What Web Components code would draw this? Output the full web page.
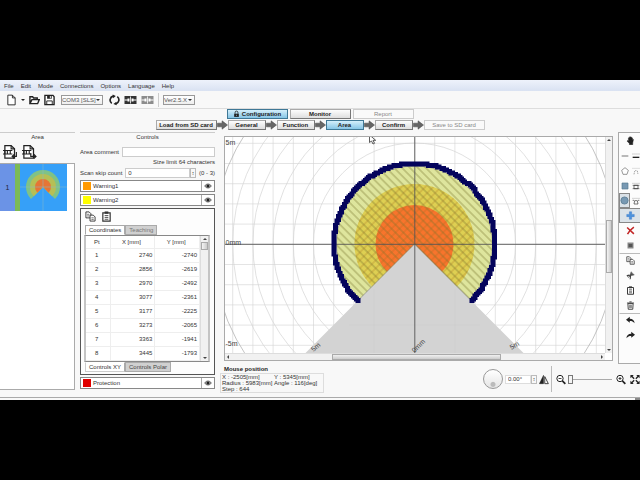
<!DOCTYPE html>
<html lang="en">
<head>
<meta charset="utf-8">
<title>Area configuration</title>
<style>
html,body{height:100%}
body{margin:0;padding:80px 0;box-sizing:border-box;background:#000;font:6px/8px "Liberation Sans",Arial,sans-serif;color:#333;overflow:hidden}
</style>
</head>
<body>
<area-designer></area-designer>
<script>
const define = (tag, css, html) => {
  const t = document.createElement('template');
  t.innerHTML = `<style>*{box-sizing:border-box}button,input,select{font:inherit;color:inherit;margin:0;padding:0;border-radius:0}button{background:none;border:0}:host{display:block}${css}</style>${typeof html === 'string' ? html : ''}`;
  customElements.define(tag, class extends HTMLElement {
    constructor() {
      super();
      this.attachShadow({mode: 'open'}).append(t.content.cloneNode(true));
    }
    connectedCallback() {
      if (typeof html === 'function' && !this.ready) {
        this.ready = true;
        this.shadowRoot.innerHTML += html(this);
      }
    }
  });
};

const icons = {
  file: '<path d="M2 .7h5l3 3v7.6H2z" fill="#fff" stroke="#222"/><path d="M7 .7v3h3" fill="none" stroke="#222"/>',
  open: '<path d="M1 10V2.500h3l1 1.300h4v2M1 10l2.200-4.400h8L9.400 10z" fill="none" stroke="#222" stroke-width="1.500"/>',
  save: '<path d="M1 1h8.800L11 2.400V11H1z" fill="#fff" stroke="#222" stroke-width="1.500"/><path d="M3.400 1h5v3.600h-5z" fill="#222"/><path d="M6.400 1.600h1V4h-1z" fill="#fff"/><path d="M3 11V7h6v4" fill="none" stroke="#222"/>',
  refresh: '<path d="M3 9.600A4.400 4.400 0 0 1 4.500 1.800M9 2.400a4.400 4.400 0 0 1-1.500 7.800" fill="none" stroke="#222" stroke-width="1.800"/><path d="M4 0l3.400 1.600L4.600 4.200zM8 7.800l.2 4-3.400-1.400z" fill="#222"/>',
  link: '<path d="M0 2h12v8H0z" fill="currentColor"/><path d="M0 6h3.500M8.500 6H12" stroke="#fff" stroke-width="1"/><path d="M3 4.500h2v3H3zM7 4.500h2v3H7z" fill="#fff"/><path d="M5.600 2.500v7h.8v-7z" fill="#fff"/>',
  lock: '<path d="M2 5.500h8V11H2z" fill="#222"/><path d="M3.600 5.500V3.400a2.400 2.400 0 0 1 4.800 0v2.100" fill="none" stroke="#222" stroke-width="1.400"/><path d="M5.500 7.300h1v2h-1z" fill="#9cd0ea"/>',
  arrow: '<path d="M0 3.800h5.500V1L12 6l-6.500 5V8.200H0z" fill="#666" stroke="#444" stroke-width=".6"/>',
  import: '<path d="M1.500.8h5l2.700 2.700v7.300H1.500z" fill="#fff" stroke="#222"/><path d="M6.500.8v2.700h2.700M0 4.800h7.500M0 7.600h7.500M1.500 5v2.500M3.500 5v2.500M5.800 5v2.500" fill="none" stroke="#222" stroke-width=".9"/><path d="M10.700 6v3.500H7.500m1.500-1.600L7.300 9.500 9 11.200" fill="none" stroke="#222" stroke-width=".9"/>',
  export: '<path d="M1.500.8h5l2.700 2.700v7.300H1.500z" fill="#fff" stroke="#222"/><path d="M6.500.8v2.700h2.700M0 4.800h7.500M0 7.600h7.500M1.500 5v2.500M3.500 5v2.500M5.800 5v2.500" fill="none" stroke="#222" stroke-width=".9"/><path d="M7 7v2.500h4m-1.600-1.700 1.800 1.700-1.800 1.700" fill="none" stroke="#222" stroke-width=".9"/>',
  eye: '<path d="M1 6c2.500-4 7.500-4 10 0-2.500 4-7.500 4-10 0z" fill="#bbb" stroke="#333"/><circle cx="6" cy="6" r="2.300" fill="#222"/>',
  copy: '<path d="M1 1h3.500L6.500 3v4.500H1z" fill="#fff" stroke="#333"/><path d="M2.300 3.600h2.500M2.300 5.400h2.500" stroke="#333" stroke-width=".7"/><path d="M5.500 4.500H9L11 6.500V11H5.500z" fill="#fff" stroke="#333"/><path d="M7 7.400h2.500M7 9.200h2.500" stroke="#333" stroke-width=".7"/>',
  paste: '<path d="M2 2h8v9H2z" fill="#fff" stroke="#333" stroke-width="1.300"/><path d="M4 .5h4v2.500H4z" fill="#333"/><path d="M4 5h4M4 7h4M4 9h4" stroke="#333" stroke-width=".9"/>',
  trash: '<path d="M2.500 3.500h7L9 11H3z" fill="#fff" stroke="#333" stroke-width="1.200"/><path d="M1.300 2.700h9.400M4.500 1.200h3" stroke="#333" stroke-width="1.200"/><path d="M4.700 5v4.500M6 5v4.500M7.300 5v4.500" stroke="#333" stroke-width=".7"/>',
  hand: '<path d="M3.200 6.500V2.600q.6-.8 1.200 0V1.500q.7-.9 1.400 0v-.3q.7-.8 1.400.2v1q.8-.7 1.400.2v1.900q1-.6 1.400.2L9 9v2.500H4.500V10L1.300 6.700q.7-1.200 1.900-.2z" fill="#222" stroke="#222" stroke-width=".6"/>',
  line: '<path d="M1 6h10" stroke="#444" stroke-width="1.100"/>',
  polygon: '<path d="M6 1l5 4-2 6H3L1 5z" fill="#fff" stroke="#666"/>',
  square: '<path d="M1.500 1.500h9v9h-9z" fill="#7899b3" stroke="#55788f"/>',
  circle: '<circle cx="6" cy="6" r="4.800" fill="#7899b3" stroke="#55788f"/>',
  dashline: '<path d="M1 3h10" stroke="#444" stroke-dasharray="1 2"/><path d="M1 8h10" stroke="#222" stroke-width="2"/>',
  dashpoly: '<path d="M1 2h10" stroke="#777" stroke-dasharray="1 2"/><path d="M3 11l1-5 2-1 2 1 1 5" fill="none" stroke="#777" stroke-dasharray="2 1"/>',
  dashrect: '<path d="M1 2h10" stroke="#444" stroke-dasharray="1 2"/><path d="M3 5h6v5H3zM1 5h10M1 10h10" fill="none" stroke="#333"/>',
  dashcircle: '<path d="M1 2h10" stroke="#444" stroke-dasharray="1 2"/><path d="M4 5.500h4l1 5H3zM1 5h2M9 5h2" fill="none" stroke="#333"/>',
  plus: '<path d="M4.500 1h3v3.500H11v3H7.500V11h-3V7.500H1v-3h3.500z" fill="#4d92dd" stroke="#2c6fc0" stroke-width=".5"/>',
  cross: '<path d="M1.500 2l9 8.500M10.500 1.500C7 4 4 7 2 10.800" stroke="#c22525" stroke-width="2" fill="none"/>',
  fill: '<path d="M2 2h8v8H2z" fill="#888"/><path d="M3.500 4h5v4h-5z" fill="#555"/>',
  cut: '<path d="M7 1L5.500 11M1 6l10-1" stroke="#333" stroke-width="1.300"/><circle cx="3.500" cy="7" r="1.300" fill="none" stroke="#333"/><circle cx="8" cy="4" r="1.300" fill="none" stroke="#333"/>',
  undo: '<path d="M0 5l5-4v2.600c4 0 6 2 6.500 6C9.500 7.300 8 6.600 5 6.600V9z" fill="#222"/>',
  redo: '<path d="M12 5L7 1v2.600c-4 0-6 2-6.500 6C2.500 7.300 4 6.600 7 6.600V9z" fill="#222"/>',
  mirror: '<path d="M5.400 1v10H.5z" fill="#222" stroke="#222" stroke-width=".6"/><path d="M6.900 2.500V11h4.300z" fill="#fff" stroke="#222"/>',
  zoomout: '<circle cx="4.800" cy="4.800" r="3.800" fill="#fff" stroke="#222" stroke-width="1.200"/><path d="M7.700 7.700l3.500 3.500" stroke="#222" stroke-width="2"/><path d="M3 4.800h3.600" stroke="#222"/>',
  zoomin: '<circle cx="4.800" cy="4.800" r="3.800" fill="#fff" stroke="#222" stroke-width="1.200"/><path d="M7.700 7.700l3.500 3.500" stroke="#222" stroke-width="2"/><path d="M3 4.800h3.600M4.800 3v3.600" stroke="#222"/>',
  fit: '<path d="M.5.500h4l-4 4zM11.500.500v4l-4-4zM.5 11.500v-4l4 4zM11.500 11.500h-4l4-4z" fill="#222"/><path d="M1.500 1.500L5 5M10.500 1.500L7 5M1.500 10.500L5 7M10.500 10.500L7 7" stroke="#222" stroke-width="1.600"/>'
};
define('ui-icon', ':host{display:inline-block;width:12px;height:12px;flex:none}svg{display:block;width:100%;height:100%}',
  el => `<svg viewBox="0 0 12 12" aria-hidden="true">${icons[el.getAttribute('name')]}</svg>`);

define('menu-bar', `:host{background:linear-gradient(#eef2fb,#d9e2f2)}
nav{display:flex;gap:7px;padding:2px 4px 1px}button{line-height:8px}`,
  '<nav aria-label="Menu"><button>File</button><button>Edit</button><button>Mode</button><button>Connections</button><button>Options</button><button>Language</button><button>Help</button></nav>');

define('tool-bar', `:host{display:flex;align-items:center;gap:4px;height:17px;padding:0 6px}
button{display:flex;align-items:center}ui-icon{width:11px;height:12px}
.caret{border:2px solid transparent;border-top-color:#222;border-bottom:0}
.wide{width:13px}.off{color:#8c8c8c}
hr{width:1px;height:14px;margin:0;border:0;background:#ccc}
select{appearance:none;width:42px;height:10px;border:1px solid #999;padding:0;color:#555;background:linear-gradient(#fff,#eee)}
.combo{display:grid;align-items:center}.combo>*{grid-area:1/1}.combo::after{content:"";grid-area:1/1;justify-self:end;margin-right:3px;border:2px solid transparent;border-top-color:#333;border-bottom:0;pointer-events:none}
.combo{margin:0 2px}.ver{margin:0}.ver select{width:32px}`,
`<button aria-label="New"><ui-icon name="file"></ui-icon></button><i class="caret"></i><button aria-label="Open"><ui-icon name="open"></ui-icon></button><button aria-label="Save"><ui-icon name="save"></ui-icon></button>
<span class="combo"><select aria-label="Port"><option>COM3 [SLS]</option></select></span>
<button aria-label="Reload"><ui-icon name="refresh"></ui-icon></button><button aria-label="Connect"><ui-icon class="wide" name="link"></ui-icon></button><button class="off" aria-label="Disconnect"><ui-icon class="wide" name="link"></ui-icon></button><hr>
<span class="combo ver"><select aria-label="Version"><option>Ver2.5.X</option></select></span>`);

define('step-button', `:host{width:38px}:host([wide]){width:61px}
button{display:flex;align-items:center;justify-content:center;gap:2px;width:100%;height:10px;font-weight:bold;color:#222;white-space:nowrap;border:1px solid #aaa;border-right-color:#777;border-bottom-color:#777;background:linear-gradient(#fdfdfd,#dedede)}
:host([on]) button{border-color:#3f7896;background:linear-gradient(#d4effb,#86c5e6)}
:host([off]) button{font-weight:normal;color:#888;border-color:#ccc;background:#fafafa}`, '<button><slot></slot></button>');

define('step-nav', `:host{border-top:1px solid #ddd;padding-bottom:1px}
nav{display:flex;justify-content:center;gap:2px}.steps{gap:0;margin-top:1px}ui-icon{width:11px;height:10px}ui-icon.lock{width:7px;height:8px}`,
`<nav aria-label="Mode"><step-button wide on><ui-icon class="lock" name="lock"></ui-icon>Configuration</step-button><step-button wide>Monitor</step-button><step-button wide off>Report</step-button></nav>
<nav class="steps" aria-label="Steps"><step-button wide>Load from SD card</step-button><ui-icon name="arrow"></ui-icon><step-button>General</step-button><ui-icon name="arrow"></ui-icon><step-button>Function</step-button><ui-icon name="arrow"></ui-icon><step-button on>Area</step-button><ui-icon name="arrow"></ui-icon><step-button>Confirm</step-button><ui-icon name="arrow"></ui-icon><step-button wide off>Save to SD card</step-button></nav>`);

const sector = (r, cx = 415, cy = 245) => {
  const d = r * Math.SQRT1_2;
  return `M${cx} ${cy}L${cx - d} ${cy + d}A${r} ${r} 0 1 1 ${cx + d} ${cy + d}Z`;
};

define('area-list', `:host{display:flex;flex-direction:column;border-top:1px solid #ccc}
h2{margin:0;font:inherit;text-align:center}
.io{display:flex;gap:4px;padding:3px}.io ui-icon{display:block;width:15px;height:16px}
ul{flex:1;margin:0;padding:0;list-style:none;background:#fff;border:1px solid #aaa;border-left:0}
.item{display:grid;grid-template-columns:15px 5px 47px;width:67px;height:47px;border:0;background:#39f}
.num{display:grid;place-items:center;background:#6b93e6;color:#223;font-size:7px}.bar{background:#7cba55}svg{width:100%;height:100%}`,
`<h2>Area</h2><div class="io"><button aria-label="Import area"><ui-icon name="import"></ui-icon></button><button aria-label="Export area"><ui-icon name="export"></ui-icon></button></div>
<ul><li><button class="item"><span class="num">1</span><span class="bar"></span><svg viewBox="0 0 47 47"><path fill="#36a0f8" d="M0 0h47v47H0z"/><path d="${sector(17,23,23)}" fill="#7fc287"/><path d="${sector(13,23,23)}" fill="#b6bf55"/><path d="${sector(8,23,23)}" fill="#e67536"/><path d="M23 0v47M0 23h47" stroke="#8bb8c8" stroke-width=".5"/></svg></button></li></ul>`);

define('zone-row', `:host{display:flex;align-items:center;height:12px;background:#fff;border:1px solid #888}
i{width:8px;height:8px;margin:0 2px;background:var(--zone)}span{flex:1}
button{display:grid;place-items:center;width:13px;height:10px;border-left:1px solid #aaa}ui-icon{width:8px;height:8px}`,
'<i></i><span><slot></slot></span><button aria-label="Show zone"><ui-icon name="eye"></ui-icon></button>');

define('scroll-track', `:host{display:flex;flex-direction:column;align-items:center;background:#f1f1f1;border-left:1px solid #ddd}
i{border:2px solid transparent;border-bottom-color:#444;border-top:0;margin:2px 0}i:last-child{transform:rotate(180deg)}
b{align-self:stretch;background:linear-gradient(90deg,#f4f4f4,#ccc);border:1px solid #aaa;height:var(--size,8px)}
.a{flex:var(--before,0)}.z{flex:var(--after,1)}
:host([flat]){flex-direction:row;border:0;border-top:1px solid #ddd}:host([flat]) b{height:auto;flex:var(--grow);background:linear-gradient(#f0f0f0,#ccc)}
:host([flat]) i{margin:0 1px;transform:rotate(-90deg)}:host([flat]) i:last-child{transform:rotate(90deg)}`,
'<i></i><span class="a"></span><b></b><span class="z"></span><i></i>');

const points = [[2740,-2740],[2856,-2619],[2970,-2492],[3077,-2361],[3177,-2225],[3273,-2065],[3363,-1941],[3445,-1793]];
define('coordinate-table', `:host{display:flex;border:1px solid #888;border-left:2px solid #c4c4c4;border-right:2px solid #c4c4c4;background:#fff}
table{flex:1;border-collapse:collapse;table-layout:fixed}th{font-weight:normal;height:12px}
td,th{padding:0 2px 0 0;border-right:1px solid #eee;border-bottom:1px solid #eee}td{height:14px;text-align:right}
tr>:first-child{width:24px;text-align:center}scroll-track{width:8px}`,
`<table><thead><tr><th>Pt</th><th>X [mm]</th><th>Y [mm]</th></tr></thead><tbody>${points.map((p, i) => `<tr><td>${i + 1}</td><td>${p[0]}</td><td>${p[1]}</td></tr>`).join('')}</tbody></table><scroll-track></scroll-track>`);

define('tab-strip', ':host{display:flex;padding-left:1px}', '<slot></slot>');

define('zone-controls', `:host{border-top:1px solid #ccc}
h2{margin:0 0 5px;font:inherit;text-align:center}
.row{display:flex;align-items:center;gap:3px;height:11px;white-space:nowrap}
input{flex:1;width:0;min-width:0;height:10px;border:1px solid #ccc;padding:0 2px;background:#fff;appearance:none}
.limit{margin:1px 0;text-align:right}
.spin{flex:1;display:flex;min-width:0}.spin button{width:6px;height:10px;border:1px solid #bbb;font-size:5px;line-height:4px}
zone-row{margin-top:2px}
.panel{margin-top:2px;padding:2px 4px 2px 3px;border:1px solid #555;background:#fdfdfd}
.tools{display:flex;gap:5px;padding:0 1px 3px}.tools ui-icon{display:block;width:11px;height:11px}
tab-strip button{height:10px;padding:0 3px;border:1px solid #aaa;background:#d0d0d0;color:#777;line-height:8px}
tab-strip button[aria-selected]{border-bottom-color:#fff;background:#fff;color:#333}
.bottom button{color:#444}.bottom button[aria-selected]{border-color:#fff #aaa #ccc #ccc}`,
`<h2>Controls</h2>
<div class="row"><label for="c">Area comment</label><input id="c" type="text"></div>
<div class="limit">Size limit 64 characters</div>
<div class="row"><label for="s">Scan skip count</label><span class="spin"><input id="s" type="text" value="0"><button aria-label="Change skip count">&#8597;</button></span><span>(0 - 3)</span></div>
<zone-row style="--zone:#f90">Warning1</zone-row><zone-row style="--zone:#ff0">Warning2</zone-row>
<div class="panel"><div class="tools"><button aria-label="Copy"><ui-icon name="copy"></ui-icon></button><button aria-label="Paste"><ui-icon name="paste"></ui-icon></button></div>
<tab-strip><button aria-selected="true">Coordinates</button><button>Teaching</button></tab-strip>
<coordinate-table></coordinate-table>
<tab-strip class="bottom"><button aria-selected="true">Controls XY</button><button>Controls Polar</button></tab-strip></div>
<zone-row style="--zone:#e00000">Protection</zone-row>`);

const grid = [];
for (let k = -10; k <= 10; k++) {
  grid.push(`M${415 + k * 20.2} 100V400`);
  if (Math.abs(k) < 6) grid.push(`M200 ${245.3 + k * 20.2}H640`);
}
const rings = [5,6,7,8,9].map(k => `<circle cx="415" cy="245" r="${k * 20.2}"/>`).join('');
// The scan outline is a chain of square points laid on a coarse raster.
const outline = Array.from({length: 181}, (_, i) => {
  const a = (135 + i * 1.5) * Math.PI / 180;
  const x = Math.round((415 + 80.5 * Math.cos(a)) / 1.5) * 1.5, y = Math.round((245 + 80.5 * Math.sin(a)) / 1.5) * 1.5;
  return `M${x - 2.5} ${y - 2.5}h5v5h-5z`;
}).join('');
define('area-plot', `:host{display:grid;grid-template:minmax(0,1fr) 7px/minmax(0,1fr) 7px;border:1px solid #aaa;background:#fff;min-height:0}
svg{display:block;width:100%;height:100%;min-height:0}text{font:7px "Liberation Sans",Arial,sans-serif;fill:#444}`,
`<svg viewBox="225 138 381 216" preserveAspectRatio="xMidYMid slice" role="img" aria-label="Detection area">
<defs><pattern id="a" width="5.600" height="5.600" patternUnits="userSpaceOnUse" patternTransform="rotate(45)"><path d="M0 2.800h5.600" stroke="#77742c" stroke-width=".6"/></pattern>
<pattern id="b" width="5.600" height="5.600" patternUnits="userSpaceOnUse" patternTransform="rotate(-45)"><path d="M0 2.800h5.600" stroke="#a0691c" stroke-width=".4"/></pattern></defs>
<path d="${grid.join('')}" fill="none" stroke="#d2d2d2" stroke-width=".6"/>
<g fill="none" stroke="#d4d4d4" stroke-width=".7">${rings}<circle cx="415" cy="245" r="202" stroke="#aaa"/></g>
<path d="M415 245L306 354V400H524V354z" fill="#d3d3d3"/>
<path d="M374.500 290v70M455.500 290v70M350 326H480" stroke="#cdcdcd" stroke-width=".6"/>
<path d="${sector(78)}" fill="#dee59d"/><path d="${sector(60)}" fill="#decf52"/><path d="${sector(39)}" fill="#f8742c"/>
<path d="${sector(78)}" fill="url(#a)" stroke="#777" stroke-width=".6"/><path d="${sector(60)}" fill="url(#b)"/>
<path d="M225 245.300H606M415.300 138V354" stroke="#555" stroke-width=".9"/>
<path d="${outline}" fill="#04045c"/>
<text x="226" y="146">5m</text><text x="226" y="246">0mm</text><text x="226" y="347">-5m</text>
<text transform="translate(314 353)rotate(-40)">5m</text><text transform="translate(415 354)rotate(-45)">0mm</text><text transform="translate(512 351)rotate(-30)">5m</text>
<path d="M370 136v7.500l2-1.500 1.500 3 1.500-.7-1.500-3h2.700z" fill="#fff" stroke="#333" stroke-width=".8"/>
</svg><scroll-track style="--size:53px;--before:78;--after:75"></scroll-track><scroll-track flat style="--before:102;--grow:169;--after:99"></scroll-track>`);

define('view-footer', `:host{display:flex;align-items:flex-start;padding-top:4px;height:36px}
h2{margin:0;font:bold 6px/8px "Liberation Sans",Arial,sans-serif;color:#222}
dl{display:grid;grid-template-columns:52px 48px;margin:0 0 0 -4px;padding:0 1px;border:1px solid #ddd;line-height:6px}dl div{white-space:nowrap}dt,dd{display:inline;margin:0}
.tools{display:flex;align-items:center;margin:0 -27px 0 auto;height:28px;gap:2px}
.dial{width:20px;height:20px;border:1px solid #999;border-radius:50%;background:radial-gradient(circle at 50% 80%,#bbb 0 2px,#0000 3px),linear-gradient(#fff,#e4e4e4)}
.angle{display:flex}.angle input{width:26px;height:9px;border:1px solid #ddd;padding:0 2px}.angle button{width:6px;border:1px solid #bbb;font-size:5px;line-height:4px}
ui-icon{display:block;width:10px;height:11px}hr{width:1px;height:26px;border:0;margin:0 2px 0 0;background:#bbb}
input[type=range]{appearance:none;width:44px;height:10px;background:linear-gradient(#aaa,#aaa) 0 50%/100% 1px no-repeat}
input[type=range]::-webkit-slider-thumb{appearance:none;width:5px;height:9px;border:1px solid #777;background:#f4f4f4}
.in{margin-left:2px}.fit{margin-left:2px}`,
`<section><h2>Mouse position</h2><dl><div><dt>X :</dt> <dd>-2505[mm]</dd></div><div><dt>Y :</dt> <dd>5345[mm]</dd></div><div><dt>Radius :</dt> <dd>5983[mm]</dd></div><div><dt>Angle :</dt> <dd>116[deg]</dd></div><div><dt>Step :</dt> <dd>644</dd></div></dl></section>
<div class="tools"><button class="dial" aria-label="Rotate"></button><span class="angle"><input type="text" aria-label="Angle" value="0.00°"><button aria-label="Change angle">&#8597;</button></span><button aria-label="Mirror"><ui-icon name="mirror"></ui-icon></button><hr><button aria-label="Zoom out"><ui-icon name="zoomout"></ui-icon></button><input type="range" aria-label="Zoom" value="0"><button class="in" aria-label="Zoom in"><ui-icon name="zoomin"></ui-icon></button><button class="fit" aria-label="Fit"><ui-icon name="fit"></ui-icon></button></div>`);

const tool = (name, cls = '') => `<button class="${cls}" aria-label="${name}"><ui-icon name="${name}"></ui-icon></button>`;
define('draw-tools', `:host{display:grid;grid-template-columns:11px 11px;grid-auto-rows:15px;align-content:start;border:1px solid #aaa;border-right:0;background:#fcfcfc}
button{display:grid;place-items:center;border:1px solid transparent}.w{grid-column:1/3}.on{border-color:#888;background:#dbe2e8}.sep{border-top-color:#bbb}
ui-icon{width:8px;height:8px}.w ui-icon{width:9px;height:9px}.on ui-icon{width:9px;height:9px}`,
tool('hand','w') + tool('line') + tool('dashline') + tool('polygon') + tool('dashpoly') + tool('square') + tool('dashrect') + tool('circle','on') + tool('dashcircle') + tool('plus','w on') + tool('cross','w') + tool('fill','w') + tool('copy','w sep') + tool('cut','w') + tool('paste','w') + tool('trash','w') + tool('undo','w sep') + tool('redo','w'));

define('area-designer', `:host{display:flex;flex-direction:column;height:100%;background:#f8f8f8;overflow:hidden}
main{flex:1;min-height:0;display:grid;grid-template-columns:75px 135px minmax(0,1fr) 22px;column-gap:5px}
area-list,zone-controls{margin:1px 0 7px}.view{display:flex;flex-direction:column;min-height:0;padding:5px 0 0 4px}area-plot{flex:1}
draw-tools{margin:1px 0 33px}footer{display:flex;justify-content:flex-end;height:3px;border-top:1px solid #aaa}footer i{width:5px;background:#888}`,
`<menu-bar></menu-bar><tool-bar></tool-bar><step-nav></step-nav>
<main><area-list></area-list><zone-controls></zone-controls><div class="view"><area-plot></area-plot><view-footer></view-footer></div><draw-tools></draw-tools></main><footer><i></i></footer>`);
</script>
</body>
</html>
